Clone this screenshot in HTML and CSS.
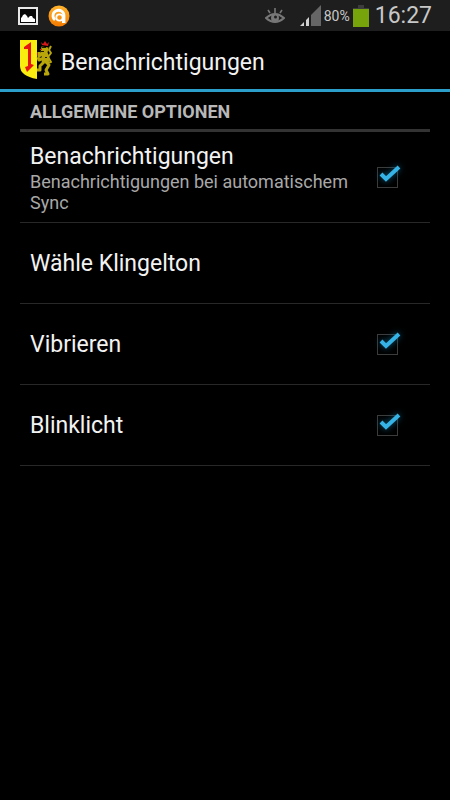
FILE: index.html
```html
<!DOCTYPE html>
<html lang="de">
<head>
<meta charset="utf-8">
<meta name="viewport" content="width=device-width, initial-scale=1">
<title>Benachrichtigungen</title>
<link rel="stylesheet" href="styles.css">
</head>
<body>
<div class="status">
  <svg class="photo" width="20" height="18" viewBox="0 0 20 18" aria-hidden="true">
    <rect x="1" y="1" width="18" height="16" fill="#080808" stroke="#e8e8e8" stroke-width="2"/>
    <path d="M3 15V11L4 10L5 8L7 7L9 9L10 11L12 9L14 9L15 11L17 12V15Z" fill="#fff"/>
  </svg>
  <svg class="app" width="22" height="22" viewBox="0 0 22 22" aria-hidden="true">
    <defs><linearGradient id="orange" x2="0" y2="1"><stop stop-color="#ffb52e"/><stop offset="1" stop-color="#f47a00"/></linearGradient></defs>
    <circle cx="11" cy="11" r="10.500" fill="url(#orange)"/>
    <path d="M7 15A5.500 5.500 0 1 1 16 11V16.500H14" fill="none" stroke="#fff" stroke-width="2.800"/>
    <circle cx="11.500" cy="12.500" r="3.200" fill="none" stroke="#fff" stroke-width="1.800"/>
  </svg>
  <svg class="eye" width="20" height="16" viewBox="0 0 20 16" aria-hidden="true">
    <g fill="none" stroke="#777">
      <path d="M1 10Q10 2 19 10Q10 18 1 10Z" stroke-width="2"/>
      <path d="M10 5V0M5 5L3 2M15 5L17 2" stroke-width="1.600"/>
    </g>
    <circle cx="10" cy="10" r="4" fill="#777"/><circle cx="10.500" cy="9" r="1.500" fill="#1e1e1e"/>
  </svg>
  <svg class="signal" width="21" height="21" viewBox="0 0 21 21" aria-hidden="true">
    <path d="M0 21L4 17V21ZM6 21V15L9 12V21Z" fill="#d2d2d2"/>
    <path d="M11 21V10L21 0V21Z" fill="#666"/>
  </svg>
  <span class="percent">80%</span>
  <svg class="battery" width="16" height="22" viewBox="0 0 16 22" aria-hidden="true">
    <path d="M5 0H11V3H16V5H0V3H5Z" fill="#3c3c3c"/><rect y="4" width="16" height="18" fill="#77a40a"/>
  </svg>
  <time class="clock">16:27</time>
</div>
<header class="bar">
  <svg width="34" height="40" viewBox="0 0 34 40" aria-hidden="true">
    <path d="M0 0H17V39Q0 36 0 26Z" fill="#fbec10"/>
    <path d="M4 7L11 2V24L14 25L7 32L5 27L8 26V9L4 9Z" fill="#e81414"/>
    <g fill="none" stroke="#b8a60b" stroke-linejoin="round">
      <path d="M25 7L24 13L26 18L25 23" stroke-width="7"/>
      <path d="M24 13L19 16V12M24 18L19 20L18 17" stroke-width="3"/>
      <path d="M24 22L20 26V30H17M26 22L29 25L26 30L28 34H24" stroke-width="3"/>
      <path d="M27 23L31 22L28 17L31 13L29 10L31 6" stroke-width="2"/>
    </g>
    <path d="M22 7H26V8H22ZM21 11H24V12H21ZM25 17H27V18H25Z" fill="#221d00"/>
    <path d="M21 2L23 4L25 1L27 4L29 2L28 6L22 5Z" fill="#d51818"/>
    <path d="M20 9H22V10H20ZM17 13H18V15H17Z" fill="#d51818"/>
  </svg>
  <h1>Benachrichtigungen</h1>
</header>
<main>
  <h2>Allgemeine Optionen</h2>
  <label class="row first">
    <span class="text"><span class="name">Benachrichtigungen</span><span class="note">Benachrichtigungen bei automatischem Sync</span></span>
    <span class="check"><input type="checkbox" checked><svg width="29" height="29" viewBox="0 0 29 29" aria-hidden="true"><path d="M8 11L13 16L26 4"/></svg></span>
  </label>
  <button class="row" type="button"><span class="name">Wähle Klingelton</span></button>
  <label class="row">
    <span class="name">Vibrieren</span>
    <span class="check"><input type="checkbox" checked><svg width="29" height="29" viewBox="0 0 29 29" aria-hidden="true"><path d="M8 11L13 16L26 4"/></svg></span>
  </label>
  <label class="row">
    <span class="name">Blinklicht</span>
    <span class="check"><input type="checkbox" checked><svg width="29" height="29" viewBox="0 0 29 29" aria-hidden="true"><path d="M8 11L13 16L26 4"/></svg></span>
  </label>
</main>
</body>
</html>
```
FILE: styles.css
```css
* { box-sizing: border-box; }
body { margin: 0; min-height: 100vh; background: #000; color: #f2f2f2; font-family: Roboto, sans-serif; }
.status { display: flex; align-items: center; height: 31px; padding: 0 18px; background: #1e1e1e; color: #c8c8c8; }
.app { margin-left: 10px; }
.eye { margin-left: auto; }
.signal { margin-left: 15px; }
.percent { margin: 0 3px; font-size: 14px; }
.clock { margin-left: 6px; font-size: 23px; }
.bar { display: flex; align-items: center; gap: 7px; height: 61px; padding: 0 20px; border-bottom: 3px solid #2b9fc9; }
h1 { margin: 0; padding-top: 4px; font-size: 23px; font-weight: 400; }
main { padding: 0 20px; }
h2 { margin: 0; padding: 2px 10px 0; border-bottom: 3px solid #333; color: #b8b8b8; font-size: 18px; line-height: 35px; text-transform: uppercase; }
.row { display: flex; align-items: center; justify-content: space-between; width: 100%; min-height: 81px; padding: 0 28px 0 10px; border: 0; border-bottom: 1px solid #282828; background: none; color: inherit; font-family: inherit; text-align: left; }
.first { min-height: 91px; }
.text { display: flex; flex-direction: column; }
.name { padding-top: 2px; font-size: 23px; line-height: 28px; }
.note { color: #a8a8a8; font-size: 18px; line-height: 21px; }
.check { display: grid; flex: none; place-items: center; }
.check input, .check svg { grid-area: 1 / 1; }
.check input { width: 21px; height: 21px; margin: 0; border: 1px solid #3c3c3c; appearance: none; }
.check path { fill: none; stroke: #36b3e6; stroke-width: 4; }
.check svg { filter: drop-shadow(0 0 3px #0b5d7d); pointer-events: none; }
.check input:not(:checked) + svg { visibility: hidden; }
```
